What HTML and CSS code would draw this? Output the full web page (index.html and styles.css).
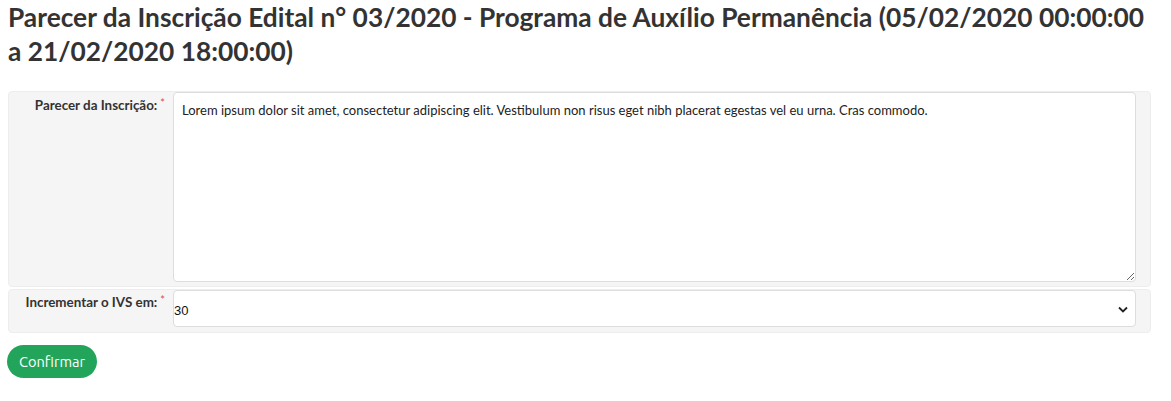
FILE: index.html
```
<!DOCTYPE html>
<html lang="pt-BR">
<head>
<meta charset="utf-8">
<title>Parecer da Inscrição</title>
<link rel="stylesheet" href="styles.css">
</head>
<body>
<div class="page">
  <h1 class="title">Parecer da Inscrição Edital n° 03/2020 - Programa de Auxílio Permanência (05/02/2020 00:00:00 a 21/02/2020 18:00:00)</h1>
  <form class="form">
    <div class="row row-text">
      <label class="label" for="parecer">Parecer da Inscrição:<span class="req">*</span></label>
      <textarea id="parecer" class="textarea">Lorem ipsum dolor sit amet, consectetur adipiscing elit. Vestibulum non risus eget nibh placerat egestas vel eu urna. Cras commodo.</textarea>
    </div>
    <div class="row row-select">
      <label class="label" for="ivs">Incrementar o IVS em:<span class="req">*</span></label>
      <div class="select-wrap">
        <select id="ivs" class="select"><option>30</option></select>
        <svg class="chev" width="10" height="7" viewBox="0 0 10 7"><path d="M1 1.5 L5 5.5 L9 1.5" fill="none" stroke="#222" stroke-width="1.8"/></svg>
      </div>
    </div>
    <button type="button" class="btn">Confirmar</button>
  </form>
</div>
</body>
</html>
```
FILE: styles.css
```
html, body { margin: 0; padding: 0; background: #fff; }
body { font-family: Lato, "Liberation Sans", sans-serif; color: #333; }
.page { padding: 0 8px; width: 1143px; }
.title {
  margin: 0;
  font-size: 26.3px;
  line-height: 34px;
  font-weight: 700;
  color: #333;
}
.form { margin-top: 23px; display: flex; flex-direction: column; }
.row {
  display: flex;
  background: #f5f5f5;
  border: 1px solid #ededed;
  border-radius: 4px;
  padding: 0 14px 5px 0;
  margin-bottom: 2px;
}
.label {
  width: 156px;
  flex: none;
  text-align: right;
  font-size: 13.4px;
  font-weight: 700;
  padding-top: 4px;
  padding-right: 0;
  box-sizing: border-box;
  color: #333;
}
.row-select .label { padding-top: 3px; }
.req { color: #e04a4a; margin-left: 3px; font-size: 11px; vertical-align: 3px; font-weight: 400; }
.row-text { height: 196px; box-sizing: border-box; }
.textarea {
  flex: 1;
  margin-left: 8px;
  height: 190px;
  box-sizing: border-box;
  border: 1px solid #ddd;
  border-radius: 4px;
  padding: 9px 8px;
  font-family: Lato, "Liberation Sans", sans-serif;
  font-size: 13px;
  line-height: 16px;
  color: #222;
  resize: vertical;
  background: #fff;
}
.row-select { height: 44px; box-sizing: border-box; }
.select-wrap { flex: 1; margin-left: 8px; position: relative; height: 37px; }
.select {
  width: 100%;
  height: 37px;
  box-sizing: border-box;
  border: 1px solid #ddd;
  border-radius: 4px;
  background: #fff;
  appearance: none;
  -webkit-appearance: none;
  padding: 4px 0 0 0;
  font-family: "Liberation Sans", Arial, sans-serif;
  font-size: 13px;
  color: #111;
}
.chev { position: absolute; right: 8px; top: 16px; pointer-events: none; }
.btn {
  align-self: flex-start;
  margin-top: 10px;
  margin-left: -1px;
  height: 33px;
  padding: 0 12px;
  border: none;
  border-radius: 17px;
  background: #22a55b;
  color: #fff;
  font-family: Ubuntu, "Noto Sans", sans-serif;
  font-size: 14.6px;
}
```
